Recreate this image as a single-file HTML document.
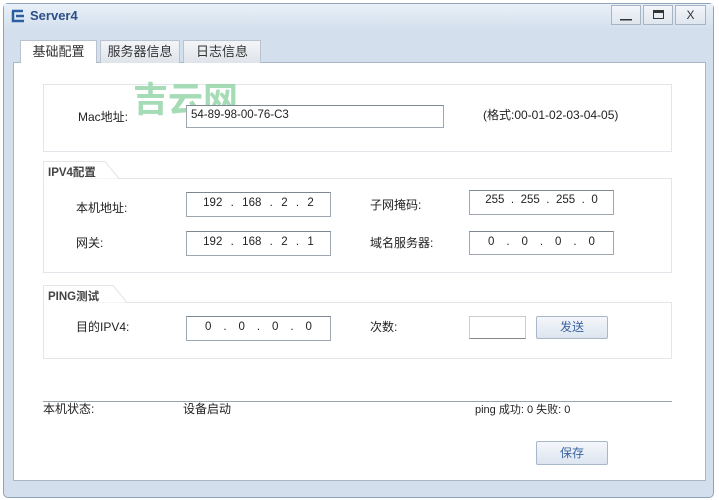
<!DOCTYPE html>
<html><head><meta charset="utf-8"><style>
*{margin:0;padding:0;box-sizing:border-box}
body{width:719px;height:500px;background:#fff;position:relative;overflow:hidden;font-family:"Liberation Sans","Noto Sans CJK SC",sans-serif;font-size:12px;color:#222}
.a{position:absolute}
.win{left:3px;top:3px;width:711px;height:495px;background:#d3dfec;border:1px solid #8fa3ba;border-radius:5px}
.title{left:4px;top:4px;width:709px;height:24px;background:linear-gradient(#e9f0f8,#d5e1ee)}
.panel{left:13px;top:62px;width:693px;height:419px;background:#fff;border:1px solid #a9b6c4}
.tab{top:40px;height:23px;background:linear-gradient(#f3f5f8,#dfe4ea);border:1px solid #b9c3cf;border-bottom:none;text-align:center;line-height:22px;font-size:13px;color:#333}
.grp{border:1px solid #e2e6ea;background:#fff}
.in{background:#fff;border:1px solid #9ea7b1;border-top-color:#7e8893;font-size:11.5px;color:#222}
.ip{display:flex;justify-content:space-around;padding:0 12px;line-height:20px}
.lbl{font-size:12px}
.btn{background:linear-gradient(#f4f7fb,#dce5ef);border:1px solid #a9b8c8;color:#3a63a0;text-align:center;line-height:21px;font-size:12px;border-radius:2px}
.ctl{top:5px;height:20px;border:1px solid #a6b4c3;background:linear-gradient(#f3f6fa,#dfe6ee);text-align:center;line-height:18px;color:#333;font-size:12px}
</style></head><body>
<div class="a win"></div>
<div class="a title"></div>
<svg class="a" style="left:10px;top:8px" width="16" height="16" viewBox="0 0 16 16"><path d="M2 3h11M3 3v10h11M6 8h8" stroke="#2a5fa0" stroke-width="2.5" fill="none"/></svg>
<div class="a" style="left:30px;top:8px;font-weight:bold;font-size:13px;color:#2c4f86">Server4</div>
<div class="a ctl" style="left:611px;width:30px">▁</div>
<div class="a ctl" style="left:643px;width:30px"><span style="display:inline-block;width:11px;height:9px;border:1px solid #333;border-top-width:3px;margin-top:4px"></span></div>
<div class="a ctl" style="left:675px;width:31px">X</div>
<div class="a panel"></div>
<div class="a tab" style="left:20px;width:77px;background:#fff">基础配置</div>
<div class="a tab" style="left:100px;width:80px">服务器信息</div>
<div class="a tab" style="left:183px;width:78px">日志信息</div>

<div class="a grp" style="left:43px;top:84px;width:629px;height:68px"></div>
<div class="a" style="left:133px;top:72px;font-size:35px;font-weight:bold;color:#8fd4a4;opacity:.8">吉云网</div>
<div class="a lbl" style="left:78px;top:108px">Mac地址:</div>
<div class="a in" style="left:186px;top:105px;width:258px;height:23px;padding:3px 4px">54-89-98-00-76-C3</div>
<div class="a lbl" style="left:483px;top:106px">(格式:00-01-02-03-04-05)</div>

<div class="a grp" style="left:43px;top:178px;width:629px;height:95px"></div>
<svg class="a" style="left:43px;top:161px" width="80" height="18"><path d="M0.5 18V0.5H62L76 17.5" fill="#fff" stroke="#e2e6ea"/></svg>
<div class="a" style="left:48px;top:164px;font-size:11.5px;color:#444;font-weight:bold">IPV4配置</div>
<div class="a lbl" style="left:76px;top:199px">本机地址:</div>
<div class="a in ip" style="left:186px;top:192px;width:145px;height:25px"><span>192</span><span>.</span><span>168</span><span>.</span><span>2</span><span>.</span><span>2</span></div>
<div class="a lbl" style="left:76px;top:234px">网关:</div>
<div class="a in ip" style="left:186px;top:231px;width:145px;height:25px"><span>192</span><span>.</span><span>168</span><span>.</span><span>2</span><span>.</span><span>1</span></div>
<div class="a lbl" style="left:370px;top:196px">子网掩码:</div>
<div class="a in ip" style="left:469px;top:190px;width:145px;height:25px;line-height:18px"><span>255</span><span>.</span><span>255</span><span>.</span><span>255</span><span>.</span><span>0</span></div>
<div class="a lbl" style="left:370px;top:234px">域名服务器:</div>
<div class="a in ip" style="left:469px;top:231px;width:145px;height:24px"><span>0</span><span>.</span><span>0</span><span>.</span><span>0</span><span>.</span><span>0</span></div>

<div class="a grp" style="left:43px;top:302px;width:629px;height:57px"></div>
<svg class="a" style="left:43px;top:285px" width="90" height="18"><path d="M0.5 18V0.5H70L84 17.5" fill="#fff" stroke="#e2e6ea"/></svg>
<div class="a" style="left:48px;top:288px;font-size:11.5px;color:#444;font-weight:bold">PING测试</div>
<div class="a lbl" style="left:76px;top:318px">目的IPV4:</div>
<div class="a in ip" style="left:186px;top:316px;width:145px;height:25px"><span>0</span><span>.</span><span>0</span><span>.</span><span>0</span><span>.</span><span>0</span></div>
<div class="a lbl" style="left:370px;top:318px">次数:</div>
<div class="a in" style="left:469px;top:316px;width:57px;height:23px;border-color:#ccc;border-bottom-color:#888"></div>
<div class="a btn" style="left:536px;top:316px;width:72px;height:23px">发送</div>

<div class="a" style="left:43px;top:401px;width:629px;height:1px;background:#9aa3ad"></div>
<div class="a lbl" style="left:43px;top:400px">本机状态:</div>
<div class="a lbl" style="left:183px;top:400px">设备启动</div>
<div class="a" style="left:475px;top:401px;font-size:11px">ping 成功: 0 失败: 0</div>
<div class="a btn" style="left:536px;top:441px;width:72px;height:24px;line-height:22px">保存</div>
</body></html>
